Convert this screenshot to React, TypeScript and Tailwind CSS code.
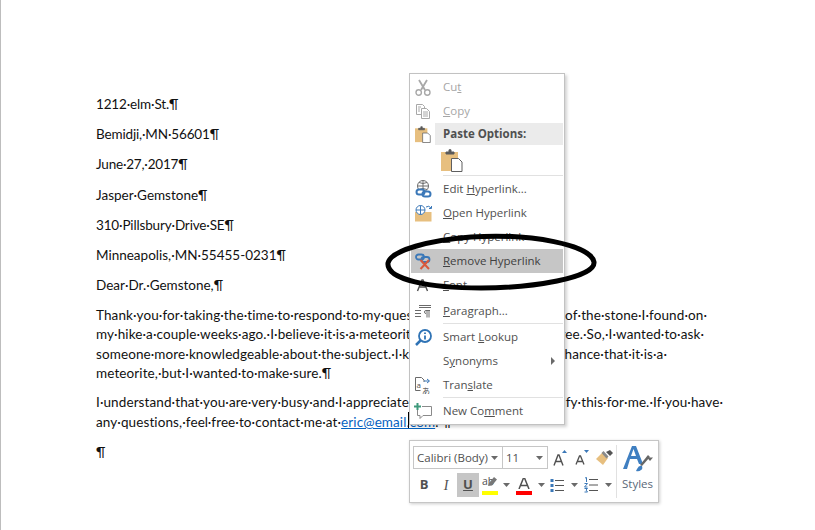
import React from "react";

const GREY = "#6e6e6e";
const BLUE = "#3b78b8";
const TAN = "#e7bf7f";

function Caret({ color = "#6a6a6a" }: { color?: string }) {
  return (
    <svg width="7" height="4" viewBox="0 0 7 4">
      <path d="M0 0h7L3.5 4z" fill={color} />
    </svg>
  );
}

function CutIcon() {
  return (
    <svg width="16" height="17" viewBox="0 0 16 17" fill="none" stroke="#a8a8a8">
      <path d="M4 1l6 10M12 1L6 11" strokeWidth="1.8" />
      <circle cx="3.7" cy="13.5" r="2.7" strokeWidth="1.4" />
      <circle cx="12.3" cy="13.5" r="2.7" strokeWidth="1.4" />
    </svg>
  );
}

function CopyIcon() {
  return (
    <svg width="16" height="16" viewBox="0 0 16 16" fill="#fff" stroke="#a8a8a8">
      <path d="M1.5 1.5h6l2 2v8h-8z" />
      <path d="M6.5 5.5h5l3 3v7h-8z" />
      <path d="M3 4h3M3 6h2M3 8h2M8 9h5M8 11h5M8 13h5" strokeWidth="1" />
    </svg>
  );
}

function PasteIcon({ big }: { big?: boolean }) {
  const size = big ? 22 : 16;
  return (
    <svg width={size} height={size + 1} viewBox="0 0 22 23">
      <rect x="0" y="3" width="17" height="19" fill={TAN} />
      <path d="M5 5V3h3V0.8h2V3h3v2z" fill="#5a5a5a" stroke="#5a5a5a" />
      <path d="M10.5 9.5h7l3.5 3.500v9.500H10.500z" fill="#fff" stroke="#5f5f5f" />
    </svg>
  );
}

function EditLinkIcon() {
  return (
    <svg width="17" height="18" viewBox="0 0 17 18">
      <g fill="none" stroke={GREY}>
        <circle cx="8" cy="6" r="5.5" />
        <path d="M2.5 6h11M8 .5v11M4 2.500q4 2 8 0M4 9.500q4-2 8 0" />
      </g>
      <g fill="#fff" stroke={BLUE} strokeWidth="2">
        <rect x="1.500" y="9.500" width="8" height="5" rx="2.500" />
        <rect x="7.500" y="11.500" width="8" height="5" rx="2.500" fill="none" />
      </g>
    </svg>
  );
}

function OpenLinkIcon() {
  return (
    <svg width="17" height="17" viewBox="0 0 17 17">
      <path d="M0 7h5l1.500-2h3v2h7v9.500H0z" fill={TAN} />
      <circle cx="5.500" cy="5" r="4.500" fill="#fff" stroke={BLUE} />
      <path d="M1 5h9M5.500.5v9" stroke={BLUE} fill="none" />
      <path d="M11 2q3-2 5 1M16.500 1v2.500H14" stroke={BLUE} fill="none" />
    </svg>
  );
}

function RemoveLinkIcon() {
  return (
    <svg width="17" height="17" viewBox="0 0 17 17">
      <g fill="none" stroke={BLUE} strokeWidth="1.800">
        <rect x="1" y="1.500" width="8" height="5" rx="2.500" />
        <rect x="6.500" y="4" width="8" height="5" rx="2.500" />
      </g>
      <path d="M5.500 7l8.500 9M14 7l-8.500 9" stroke="#d9583b" strokeWidth="2" />
    </svg>
  );
}

function FontIcon() {
  return (
    <svg width="16" height="16" viewBox="0 0 16 16" fill="none" stroke="#505050">
      <path d="M2.500 14L7 3h1l4.500 11M4.500 10h6" strokeWidth="1.400" />
    </svg>
  );
}

function ParagraphIcon() {
  return (
    <svg width="16" height="14" viewBox="0 0 16 14" fill="none" stroke="#6a6a6a">
      <path d="M4 1.500h12M4 3.500h12M0 6.500h6M0 9.500h6M0 12.500h6" />
      <path d="M11 6.500h4M11 6.500a1.500 1.500 0 0 0 0 3M12 6.500v7M14 6.500v7" />
    </svg>
  );
}

function LookupIcon() {
  return (
    <svg width="17" height="17" viewBox="0 0 17 17">
      <circle cx="10" cy="7" r="6" fill="#fff" stroke="#2f73b5" strokeWidth="1.800" />
      <path d="M5.500 11.500L1 16" stroke="#2f73b5" strokeWidth="2.500" />
      <path d="M10 3.500v1.600M10 6.500v4" stroke="#2f73b5" strokeWidth="1.800" />
    </svg>
  );
}

function TranslateIcon() {
  return (
    <svg width="18" height="17" viewBox="0 0 18 17" fill="none">
      <path d="M1.500.5h6l2.500 2.500v2M1.500.5v13h5" stroke="#6a6a6a" />
      <text x="2.500" y="11" fontSize="8" fill="#505050" fontFamily="'Open Sans', sans-serif">a</text>
      <path d="M10 4h5M13 2l2.500 2L13 6" stroke={BLUE} />
      <text x="8" y="16.500" fontSize="8" fill="#505050" fontFamily="'Noto Sans CJK JP', sans-serif">あ</text>
    </svg>
  );
}

function CommentIcon() {
  return (
    <svg width="18" height="17" viewBox="0 0 18 17" fill="none">
      <path d="M8 3.500h9.500v9H9l-3 3v-3H3.500V7" stroke="#8a8a8a" />
      <path d="M3.500 0v7M0 3.500h7" stroke="#3f9a7c" strokeWidth="2" />
    </svg>
  );
}

function Sep() {
  return <div className="ml-[33px] mr-px h-[2px] border-t border-[#e1e1e1]" />;
}

function Item({
  icon,
  children,
  off,
  active,
  arrow,
}: {
  icon?: React.ReactNode;
  children: React.ReactNode;
  off?: boolean;
  active?: boolean;
  arrow?: boolean;
}) {
  return (
    <div className={`mx-px flex h-6 items-center ${active ? "bg-[#c6c6c6]" : ""}`}>
      <div className="flex h-6 w-6 items-center justify-center">{icon}</div>
      <div className={`ml-2 flex-1 whitespace-nowrap ${off ? "text-[#a6a6a6]" : active ? "text-[#404040]" : "text-[#505050]"}`}>
        {children}
      </div>
      {arrow && (
        <svg className="mr-[8px]" width="4" height="8" viewBox="0 0 4 8">
          <path d="M0 0l4 4-4 4z" fill="#6a6a6a" />
        </svg>
      )}
    </div>
  );
}

function ContextMenu() {
  return (
    <div className="absolute left-[409px] top-[73px] flex h-[352px] w-[156px] flex-col border border-[#c2c2c2] bg-white pt-px font-['Open_Sans'] text-[11.5px] shadow-[2px_2px_3px_rgba(0,0,0,0.18)]">
      <Item icon={<CutIcon />} off>
        Cu<u>t</u>
      </Item>
      <Item icon={<CopyIcon />} off>
        <u>C</u>opy
      </Item>
      <div className="mx-px flex h-[22px] items-center">
        <div className="flex w-6 justify-center">
          <PasteIcon />
        </div>
        <div className="flex h-[22px] flex-1 items-center bg-[#ebebeb] pl-2 font-bold text-[#505050]">Paste Options:</div>
      </div>
      <div className="flex h-[30px] items-center pl-[31px]">
        <PasteIcon big />
      </div>
      <Sep />
      <Item icon={<EditLinkIcon />}>
        Edit <u>H</u>yperlink...
      </Item>
      <Item icon={<OpenLinkIcon />}>
        <u>O</u>pen Hyperlink
      </Item>
      <Item>
        <u>C</u>opy Hyperlink
      </Item>
      <Item icon={<RemoveLinkIcon />} active>
        <u>R</u>emove Hyperlink
      </Item>
      <Item icon={<FontIcon />}>
        <u>F</u>ont...
      </Item>
      <div className="h-[2px]" />
      <Item icon={<ParagraphIcon />}>
        <u>P</u>aragraph...
      </Item>
      <Sep />
      <Item icon={<LookupIcon />}>
        Smart <u>L</u>ookup
      </Item>
      <Item arrow>
        S<u>y</u>nonyms
      </Item>
      <Item icon={<TranslateIcon />}>
        Tran<u>s</u>late
      </Item>
      <Sep />
      <Item icon={<CommentIcon />}>
        New Co<u>m</u>ment
      </Item>
    </div>
  );
}

function MiniToolbar() {
  return (
    <div className="absolute left-[409px] top-[440px] flex h-[63px] w-[250px] border border-[#c6c6c6] bg-white pl-[3px] pt-[5px] font-['Open_Sans'] text-[11.5px] text-[#505050] shadow-[1px_1px_3px_rgba(0,0,0,0.2)]">
      <div className="flex w-[203px] flex-col gap-[4px]">
        <div className="flex h-[23px] items-center">
          <div className="flex h-[23px] w-[90px] items-center justify-between border border-[#c6c6c6] pl-[3px] pr-[4px]">
            <span>Calibri (Body)</span>
            <Caret />
          </div>
          <div className="-ml-px flex h-[23px] w-[46px] items-center justify-between border border-[#c6c6c6] pl-[3px] pr-[4px]">
            <span>11</span>
            <Caret />
          </div>
          <div className="flex w-6 justify-center">
            <svg width="14" height="16" viewBox="0 0 14 16" fill="none">
              <path d="M1 15.500L5 5h1l4 10.500M3 11.500h5" stroke="#505050" strokeWidth="1.400" />
              <path d="M9 3l2.500-3L14 3z" fill={BLUE} />
            </svg>
          </div>
          <div className="flex w-5 justify-center">
            <svg width="14" height="15" viewBox="0 0 14 15" fill="none">
              <path d="M1 14.500L4.500 6h1L9 14.500M2.500 11.500h5" stroke="#505050" strokeWidth="1.300" />
              <path d="M9 0h5l-2.500 3z" fill={BLUE} />
            </svg>
          </div>
          <div className="flex w-6 justify-center">
            <svg width="17" height="15" viewBox="0 0 17 15">
              <path d="M0 9l7-7 5 6-5 7z" fill={TAN} />
              <path d="M5.500 3l2-2 5 5.500-2 2z" fill="#8a8a8a" />
              <path d="M10 2l4-2 3 3-3 3z" fill="#555" />
            </svg>
          </div>
        </div>
        <div className="flex h-6 items-center">
          <div className="w-[22px] text-center text-[13px] font-bold">B</div>
          <div className="w-[22px] text-center font-['Liberation_Serif'] text-[14px] italic">I</div>
          <div className="flex h-6 w-[22px] items-center justify-center bg-[#c6c6c6] text-[13px] font-bold underline">U</div>
          <div className="relative flex h-6 w-[22px] justify-center">
            <span className="absolute left-[3px] top-[1px] text-[10.5px]">ab</span>
            <svg className="absolute left-[9px] top-[3px]" width="10" height="11" viewBox="0 0 10 11">
              <path d="M0 10l1-3 5-6 3 2.500-5 6z" fill="#777" />
            </svg>
            <div className="absolute bottom-[2px] left-[3px] h-[4px] w-4 bg-[#ffff00]" />
          </div>
          <div className="flex w-[11px] justify-center">
            <Caret />
          </div>
          <div className="relative flex h-6 w-6 justify-center">
            <svg className="absolute left-[5px] top-[5px]" width="14" height="11" viewBox="0 0 14 11" fill="none">
              <path d="M2 11L6.500 0h1L12 11M4 7.500h6" stroke="#505050" strokeWidth="1.500" />
            </svg>
            <div className="absolute bottom-[2px] left-[4px] h-[4px] w-4 bg-[#ff0000]" />
          </div>
          <div className="flex w-[10px] justify-center">
            <Caret />
          </div>
          <div className="flex w-[22px] justify-center">
            <svg width="14" height="15" viewBox="0 0 14 15" fill="none">
              <path d="M5 2.500h9M5 7.500h9M5 12.500h9" stroke="#555" />
              <path d="M0.500 1h3v3h-3zM0.500 6h3v3h-3zM0.500 11h3v3h-3z" fill={BLUE} />
            </svg>
          </div>
          <div className="flex w-3 justify-center">
            <Caret />
          </div>
          <div className="flex w-[22px] justify-center">
            <svg width="14" height="16" viewBox="0 0 14 16" fill="none">
              <path d="M5 2.500h9M5 8h9M5 13.500h9" stroke="#555" />
              <path d="M1 1l1.500-.5V5M0.500 6.500h3L.5 10h3M.5 11.500h3L2 13l1.500 2H.5" stroke={BLUE} />
            </svg>
          </div>
          <div className="flex w-3 justify-center">
            <Caret />
          </div>
        </div>
      </div>
      <div className="-mt-[1px] mb-[4px] w-px bg-[#e1e1e1]" />
      <div className="flex flex-1 flex-col items-center">
        <svg className="mt-[-1px]" width="30" height="28" viewBox="0 0 30 28">
          <path d="M0 24L9 1h4l7 18h-4l-2-5H7l-3 10zM8 11h5L10.500 4z" fill="#3f7fc1" />
          <path d="M17 20l8-10 2 2-8 9z" fill="#666" />
          <path d="M14 24q2-4 5-3 1 3-1 4-2 2-5 1z" fill="#3f7fc1" />
          <path d="M24 12.500h6l-3 3.500z" fill="#666" />
        </svg>
        <span className="mt-[2px] text-[11.5px] text-[#5a6878]">Styles</span>
      </div>
    </div>
  );
}

function Line({ left, right, width }: { left: React.ReactNode; right: string; width: string }) {
  return (
    <div className={`flex justify-between whitespace-nowrap ${width}`}>
      <span>{left}</span>
      <span>{right}</span>
    </div>
  );
}

export default function App() {
  return (
    <div className="relative h-[530px] w-[815px] overflow-hidden bg-white shadow-[inset_1px_0_0_#bdbdbd]">
      {/* document */}
      <div className="pl-[96px] pt-[95px] font-['Lato'] text-[13.5px] leading-[19.5px] text-[#111]">
        <p className="mb-[10.7px] tracking-[-0.15px]">1212·elm·St.¶</p>
        <p className="mb-[10.7px] tracking-[-0.15px]">Bemidji,·MN·56601¶</p>
        <p className="mb-[10.7px] tracking-[-0.2px]">June·27,·2017¶</p>
        <p className="mb-[10.7px]">Jasper·Gemstone¶</p>
        <p className="mb-[10.7px] tracking-[-0.15px]">310·Pillsbury·Drive·SE¶</p>
        <p className="mb-[10.7px]">Minneapolis,·MN·55455-0231¶</p>
        <p className="mb-[10.2px]">Dear·Dr.·Gemstone,¶</p>
        <div className="mb-[9.500px] tracking-[0.1px]">
          <Line width="w-[611px]" left="Thank·you·for·taking·the·time·to·respond·to·my·questions" right="·of·the·stone·I·found·on·" />
          <Line width="w-[608px]" left="my·hike·a·couple·weeks·ago.·I·believe·it·is·a·meteorite" right="free.·So,·I·wanted·to·ask·" />
          <Line width="w-[571px]" left="someone·more·knowledgeable·about·the·subject.·I·know" right="chance·that·it·is·a·" />
          <p>meteorite,·but·I·wanted·to·make·sure.¶</p>
        </div>
        <div className="mb-[11px] tracking-[0.1px]">
          <Line width="w-[627px]" left="I·understand·that·you·are·very·busy·and·I·appreciate" right="clarify·this·for·me.·If·you·have·" />
          <p className="whitespace-nowrap">
            any·questions,·feel·free·to·contact·me·at·
            <span className="text-[#0563c1] underline">eric@email.com</span>.·¶
          </p>
        </div>
        <p>¶</p>
      </div>

      {/* text cursor sits just left of the menu */}
      <div className="absolute left-[408px] top-[412px] h-[16px] w-px bg-black" />

      <ContextMenu />
      <MiniToolbar />

      {/* hand drawn circle round Remove Hyperlink */}
      <svg className="absolute left-0 top-0" width="815" height="530" fill="none">
        <path
          d="M388 263C391 250 431 240 471 237C531 233 591 245 594 262C596 278 531 288 481 288C431 288 386 280 388 263Z"
          stroke="#000"
          strokeWidth="5"
        />
      </svg>
    </div>
  );
}
